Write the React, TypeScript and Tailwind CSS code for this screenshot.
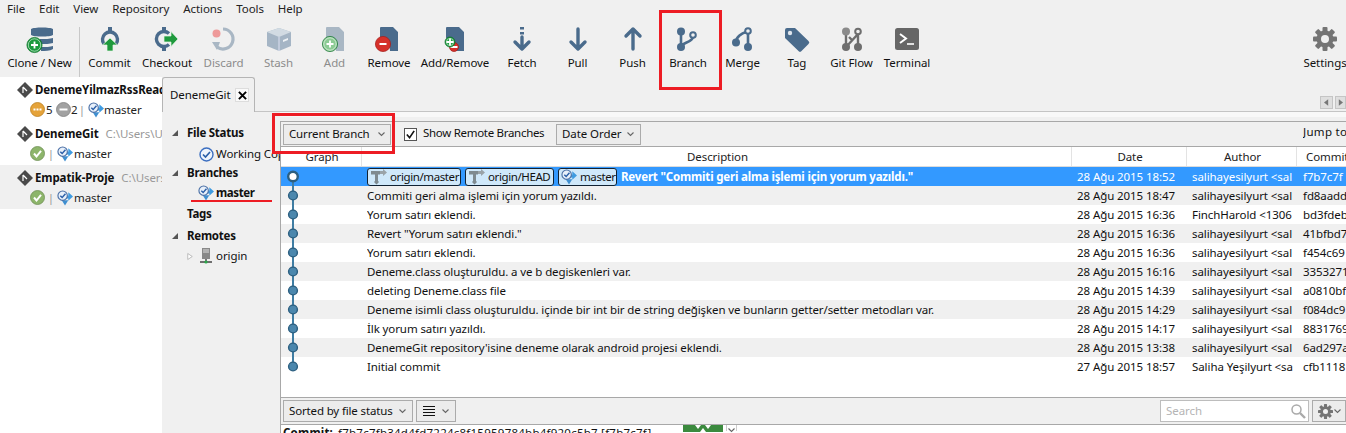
import React from "react";

const blue = "#4a6b8c";
const Plus = ({ x, y, r = 7, c = "#1a9a3c" }: { x: number; y: number; r?: number; c?: string }) => (
  <g>
    <circle cx={x} cy={y} r={r} fill={c} stroke="#0f6f2a" strokeWidth="0.7" />
    <circle cx={x} cy={y} r={r - 1.4} fill="none" stroke="#fff" strokeWidth="0.8" opacity="0.7" />
    <path d={`M${x - 3.5} ${y}h7M${x} ${y - 3.5}v7`} stroke="#fff" strokeWidth="1.8" />
  </g>
);
const Minus = ({ x, y, r = 7 }: { x: number; y: number; r?: number }) => (
  <g>
    <circle cx={x} cy={y} r={r} fill="#d5302a" stroke="#a31d18" strokeWidth="0.7" />
    <path d={`M${x - 3.5} ${y}h7`} stroke="#fff" strokeWidth="2" />
  </g>
);
const Doc = ({ c }: { c: string }) => <path d="M3 1q0-1 1-1h12l5 5v19H13c0-5-2-11-10-13Z" fill={c} />;

const icons: Record<string, React.ReactNode> = {
  clone: (
    <>
      <path d="M5 2c3-2 19-2 22 0v6c-3 2-19 2-22 0Z" fill={blue} />
      <path d="M14 12c5 0 10 0 13-1v5c-3 1-8 1-13 1Z" fill={blue} />
      <path d="M15 20c5 0 9 0 12-1v3c-3 2-8 2-12 2Z" fill={blue} />
      <Plus x={8.5} y={18} r={7.6} />
    </>
  ),
  commit: (
    <>
      <path d="M12 0v4" stroke={blue} strokeWidth="4" />
      <path d="M6 17a7.500 7.500 0 1 1 12 0" fill="none" stroke={blue} strokeWidth="3.400" />
      <path d="M12 11l7.500 7H15v6H9v-6H4.500Z" fill="#1f9a3d" stroke="#e8f5e8" strokeWidth="0.7" />
    </>
  ),
  checkout: (
    <>
      <path d="M9 0v4M9 20v4" stroke={blue} strokeWidth="4" />
      <path d="M14 6.500a7.500 7.500 0 1 0 0 11" fill="none" stroke={blue} strokeWidth="3.400" />
      <path d="M23 12l-7 7.500V15H9V9h7V4.500Z" fill="#1f9a3d" stroke="#e8f5e8" strokeWidth="0.7" />
    </>
  ),
  discard: (
    <>
      <path d="M11 2a10 10 0 1 1-6 18" fill="none" stroke="#a9b7c4" strokeWidth="3.200" />
      <path d="M0 15h8l-3 8Z" fill="#a9b7c4" />
      <circle cx="4.500" cy="6.500" r="4" fill="#ee9a9a" />
    </>
  ),
  stash: (
    <>
      <path d="M12 1l12 4v14l-12 5-12-5V5Z" fill="#a5b5c5" />
      <path d="M0 5l12 5 12-5-12-4Z" fill="#d2dbe3" />
      <path d="M12 10v14" stroke="#eef" strokeWidth="0.8" />
      <path d="M16 13l5-2v2l-5 2Z" fill="#eef2f5" />
    </>
  ),
  add: (
    <>
      <Doc c="#a9b7c4" />
      <Plus x={7} y={17} r={7.6} c="#8ccb94" />
    </>
  ),
  remove: (
    <>
      <Doc c={blue} />
      <Minus x={6} y={17} r={7.6} />
    </>
  ),
  addremove: (
    <>
      <Doc c={blue} />
      <Minus x={11} y={20} r={4.5} />
      <Plus x={7} y={15} r={5} />
    </>
  ),
  fetch: (
    <>
      <path d="M10 0h4v2.500h-4ZM10 5h4v2.500h-4Z" fill={blue} />
      <path d="M12 10v12M5 15l7 7 7-7" fill="none" stroke={blue} strokeWidth="3.400" strokeLinecap="round" strokeLinejoin="round" />
    </>
  ),
  pull: <path d="M12 2v20M5 15l7 7 7-7" fill="none" stroke={blue} strokeWidth="3.400" strokeLinecap="round" strokeLinejoin="round" />,
  push: <path d="M12 22V2M5 9l7-7 7 7" fill="none" stroke={blue} strokeWidth="3.400" strokeLinecap="round" strokeLinejoin="round" />,
  branch: (
    <>
      <path d="M5 5v15M5 20c1-5 11-4 12-10" fill="none" stroke={blue} strokeWidth="2.600" />
      <circle cx="5" cy="4.500" r="4" fill={blue} />
      <circle cx="5" cy="20" r="4" fill={blue} />
      <circle cx="17" cy="8" r="2.800" fill="#f0f0f0" stroke={blue} strokeWidth="2" />
    </>
  ),
  merge: (
    <>
      <path d="M17 7v13M5 15c0-5 6-9 10-10" fill="none" stroke={blue} strokeWidth="2.600" />
      <circle cx="17" cy="20" r="4" fill={blue} />
      <circle cx="5" cy="15.500" r="4" fill={blue} />
      <circle cx="17" cy="4" r="2.800" fill="#f0f0f0" stroke={blue} strokeWidth="2" />
    </>
  ),
  tag: (
    <>
      <path d="M0 3a2 2 0 0 1 2-2h8l13.500 13a2 2 0 0 1 0 3l-7 7a2 2 0 0 1-3 0L0 11Z" fill={blue} />
      <circle cx="5" cy="6" r="2.200" fill="#dfe6ee" />
    </>
  ),
  flow: (
    <>
      <path d="M6 5v15M18 5v15M6 20L18 7M9 10l3 3" fill="none" stroke="#6e6e6e" strokeWidth="2.400" />
      <circle cx="6" cy="4.500" r="4" fill="#8a8a8a" />
      <circle cx="6" cy="20" r="4" fill="#6e6e6e" />
      <circle cx="18" cy="4.500" r="2.800" fill="#f0f0f0" stroke="#6e6e6e" strokeWidth="2" />
      <circle cx="18" cy="20" r="4" fill="#6e6e6e" />
    </>
  ),
  terminal: (
    <>
      <rect x="0" y="1" width="24" height="22" rx="2.500" fill="#666" />
      <path d="M5 7l6 4.500-6 4.500" fill="none" stroke="#fff" strokeWidth="2" />
      <path d="M12 17h7" stroke="#fff" strokeWidth="1.600" />
    </>
  ),
  settings: <Gear c="#747474" />,
};

function Gear({ c }: { c: string }) {
  const teeth = [0, 45, 90, 135];
  return (
    <g>
      {teeth.map((a) => (
        <rect key={a} x="9.500" y="0" width="5" height="24" rx="1" fill={c} transform={`rotate(${a} 12 12)`} />
      ))}
      <circle cx="12" cy="12" r="8.500" fill={c} />
      <circle cx="12" cy="12" r="4" fill="#f0f0f0" />
    </g>
  );
}

const tools: [string, string, string, boolean?][] = [
  ["Commit", "commit", "w-[55px]"],
  ["Checkout", "checkout", "w-[60px]"],
  ["Discard", "discard", "w-[53px]", true],
  ["Stash", "stash", "w-[57px]", true],
  ["Add", "add", "w-[55px]", true],
  ["Remove", "remove", "w-[54px]"],
  ["Add/Remove", "addremove", "w-[78px]"],
  ["Fetch", "fetch", "w-[56px]"],
  ["Pull", "pull", "w-[55px]"],
  ["Push", "push", "w-[55px]"],
  ["Branch", "branch", "w-[56px]"],
  ["Merge", "merge", "w-[53px]"],
  ["Tag", "tag", "w-[56px]"],
  ["Git Flow", "flow", "w-[53px]"],
  ["Terminal", "terminal", "w-[58px]"],
];

const Tool = ({ label, icon, w, off }: { label: string; icon: string; w: string; off?: boolean }) => (
  <div className={`${w} flex shrink-0 flex-col items-center`}>
    <svg viewBox="0 0 24 24" width="24" height="24" className="shrink-0 overflow-visible">
      {icons[icon]}
    </svg>
    <span className={`mt-[3px] whitespace-nowrap leading-[17px] ${off ? "text-[#8c8c8c]" : "text-[#111]"}`}>{label}</span>
  </div>
);

const BranchIcon = () => (
  <svg viewBox="0 0 17 17" width="16" height="16" className="shrink-0">
    <path d="M9 6h3V2.500l5 4.500-5 4.500V9H9Z" fill="#3f9be0" />
    <path d="M5 11h7l-3.500 5.500Z" fill="#3f8fd0" />
    <circle cx="6" cy="6" r="5" fill="#e8f0fa" stroke="#4a6fa5" strokeWidth="1.200" />
    <path d="M3.500 6l2 2 3.500-4" fill="none" stroke="#2b5fa8" strokeWidth="1.500" />
  </svg>
);
const RemoteIcon = () => (
  <svg viewBox="0 0 17 17" width="17" height="17" className="shrink-0">
    <path d="M1 3h9v3.500H8V13l1 1-2.500 2.500L4 14l1-1V6.500H1Z" fill="#7f8a90" />
    <path d="M10 3h3V1l4 3.500-4 3.500V6h-3Z" fill="#9aa3a8" />
  </svg>
);
const Diamond = () => (
  <svg viewBox="0 0 16 16" width="16" height="16" className="shrink-0">
    <path d="M8 0l8 8-8 8-8-8Z" fill="#4a4a4a" />
    <path d="M6 5l4 4M6 5v6" stroke="#fff" strokeWidth="1.200" />
  </svg>
);
const Status = ({ kind }: { kind: "ok" | "more" | "less" }) => (
  <svg viewBox="0 0 15 15" width="15" height="15" className="shrink-0">
    {kind === "ok" && (
      <>
        <circle cx="7.500" cy="7.500" r="7" fill="#8db56b" stroke="#6f8f55" strokeWidth="0.800" />
        <path d="M4 7.500l2.500 3L11 4.800" fill="none" stroke="#fff" strokeWidth="2" />
      </>
    )}
    {kind === "more" && (
      <>
        <circle cx="7.500" cy="7.500" r="7" fill="#e5a33a" stroke="#bd8020" strokeWidth="0.800" />
        <path d="M3.500 7.500h8" stroke="#fff" strokeWidth="2" strokeDasharray="2 1" />
      </>
    )}
    {kind === "less" && (
      <>
        <circle cx="7.500" cy="7.500" r="7" fill="#a2a2a2" stroke="#808080" strokeWidth="0.800" />
        <path d="M3.500 7.500h8" stroke="#fff" strokeWidth="2" />
      </>
    )}
  </svg>
);
const Tri = () => (
  <svg viewBox="0 0 8 8" width="8" height="8" className="shrink-0">
    <path d="M7 1v6H1Z" fill="#555" />
  </svg>
);
const Chev = ({ className = "" }: { className?: string }) => (
  <svg viewBox="0 0 7 5" width="7" height="5" className={`shrink-0 ${className}`}>
    <path d="M.5 .5L3.500 3.500 6.500 .5" fill="none" stroke="#666" strokeWidth="1.100" />
  </svg>
);

const Repo = ({ name, path, sel, children }: { name: string; path?: string; sel?: boolean; children: React.ReactNode }) => (
  <div className={`flex h-[44px] flex-col overflow-hidden pl-[17px] pt-[3px] ${sel ? "bg-[#f0f0f0]" : ""}`}>
    <div className="flex h-[19px] items-center whitespace-nowrap">
      <Diamond />
      <span className="ml-[2px] font-bold tracking-[-0.1px] text-[#111]">{name}</span>
      {path && <span className="ml-[7px] text-[#999]">{path}</span>}
    </div>
    <div className="ml-[13px] mt-[1px] flex h-[19px] items-center whitespace-nowrap text-[#222]">{children}</div>
  </div>
);

const Pipe = () => <span className="w-[12px] shrink-0 text-center text-[#999]">|</span>;

const commits: [string, string, string, string][] = [
  ["Revert \"Commiti geri alma işlemi için yorum yazıldı.\"", "28 Ağu 2015 18:52", "salihayesilyurt <sal", "f7b7c7f"],
  ["Commiti geri alma işlemi için yorum yazıldı.", "28 Ağu 2015 18:47", "salihayesilyurt <sal", "fd8aadd"],
  ["Yorum satırı eklendi.", "28 Ağu 2015 16:36", "FinchHarold <1306", "bd3fdeb"],
  ["Revert \"Yorum satırı eklendi.\"", "28 Ağu 2015 16:36", "salihayesilyurt <sal", "41bfbd7"],
  ["Yorum satırı eklendi.", "28 Ağu 2015 16:36", "salihayesilyurt <sal", "f454c69"],
  ["Deneme.class oluşturuldu. a ve b degiskenleri var.", "28 Ağu 2015 16:16", "salihayesilyurt <sal", "3353271"],
  ["deleting Deneme.class file", "28 Ağu 2015 14:39", "salihayesilyurt <sal", "a0810bf"],
  ["Deneme isimli class oluşturuldu. içinde bir int bir de string değişken ve bunların getter/setter metodları var.", "28 Ağu 2015 14:29", "salihayesilyurt <sal", "f084dc9"],
  ["İlk yorum satırı yazıldı.", "28 Ağu 2015 14:17", "salihayesilyurt <sal", "8831769"],
  ["DenemeGit repository'isine deneme olarak android projesi eklendi.", "28 Ağu 2015 13:38", "salihayesilyurt <sal", "6ad297a"],
  ["Initial commit", "27 Ağu 2015 18:57", "Saliha Yeşilyurt <sa", "cfb1118"],
];

const Chip = ({ label, icon, w }: { label: string; icon: React.ReactNode; w: string }) => (
  <span className={`${w} mr-[4px] flex h-[18px] shrink-0 items-center gap-[3px] rounded-[3px] border border-[#123] bg-[#cfe8fa] pl-[2px] tracking-[-0.4px] text-[#111]`}>
    {icon}
    {label}
  </span>
);

const Row = ({ c, i }: { c: [string, string, string, string]; i: number }) => {
  const sel = i === 0;
  const n = commits.length;
  const bg = sel ? "bg-[#3399ff] text-white" : i % 2 ? "bg-[#f0f0f0] text-[#111]" : "bg-white text-[#111]";
  return (
    <div className={`flex h-[19px] items-center whitespace-nowrap ${bg}`}>
      <div className="w-[86px] shrink-0">
        <svg viewBox="0 0 86 19" width="86" height="19" className="block">
          <path d={`M12 ${i === 0 ? 9.5 : 0}V${i === n - 1 ? 9.5 : 19}`} stroke="#3f7da3" strokeWidth="2" />
          {sel ? (
            <circle cx="12" cy="9.500" r="4.800" fill="#fff" stroke="#2c5f80" strokeWidth="2.400" />
          ) : (
            <circle cx="12" cy="9.500" r="4.400" fill="#4b87ad" stroke="#2c5f80" strokeWidth="1.400" />
          )}
        </svg>
      </div>
      <div className="flex w-[705px] shrink-0 items-center overflow-hidden">
        {sel && (
          <>
            <Chip label="origin/master" icon={<RemoteIcon />} w="w-[94px]" />
            <Chip label="origin/HEAD" icon={<RemoteIcon />} w="w-[89px]" />
            <Chip label="master" icon={<BranchIcon />} w="w-[59px]" />
          </>
        )}
        <span className={sel ? "font-bold tracking-[-0.18px]" : "tracking-[-0.1px]"}>{c[0]}</span>
      </div>
      <div className="w-[115px] shrink-0 overflow-hidden pl-[5px]">{c[1]}</div>
      <div className="w-[110px] shrink-0 overflow-hidden pl-[5px]">{c[2]}</div>
      <div className="flex-1 overflow-hidden pl-[6px]">{c[3]}</div>
    </div>
  );
};

const HeaderCell = ({ w, children }: { w: string; children: React.ReactNode }) => (
  <div className={`${w} flex h-full items-center justify-center border-r border-[#e3e3e3] pl-[2px] pt-px`}>{children}</div>
);

const btn = "flex items-center justify-between whitespace-nowrap border border-[#ababab] bg-[#ececec] text-[#111]";

export default function App() {
  return (
    <div className="relative h-[433px] w-[1346px] overflow-hidden bg-[#f0f0f0] text-[11.5px] leading-[16px] tracking-[-0.08px] text-[#111] font-['Noto_Sans',sans-serif]">
      {/* Menu bar */}
      <div className="flex h-[18px] items-center gap-[14px] pl-[7px] text-[#222]">
        {["File", "Edit", "View", "Repository", "Actions", "Tools", "Help"].map((m) => (
          <span key={m}>{m}</span>
        ))}
      </div>

      {/* Toolbar */}
      <div className="flex h-[59px] items-start pt-[9px]">
        <div className="flex h-[50px] w-[80px] shrink-0 flex-col items-center border-r border-[#c8c8c8]">
          <svg viewBox="0 0 28 24" width="28" height="24" className="shrink-0 overflow-visible">
            {icons.clone}
          </svg>
          <span className="mt-[3px] whitespace-nowrap leading-[17px] text-[#111]">Clone / New</span>
        </div>
        <div className="w-[2px] shrink-0" />
        {tools.map(([l, ic, w, off]) => (
          <Tool key={l} label={l} icon={ic} w={w} off={off} />
        ))}
        <div className="flex-1" />
        <div className="w-[42px] shrink-0">
          <Tool label="Settings" icon="settings" w="w-[42px]" />
        </div>
      </div>

      {/* Body */}
      <div className="flex h-[356px]">
        <div className="w-[162px] shrink-0 overflow-hidden bg-white">
          <Repo name="DenemeYilmazRssReader">
            <Status kind="more" />
            <span className="ml-[1px] w-[7px]">5</span>
            <span className="ml-[3px] flex"><Status kind="less" /></span>
            <span className="w-[7px]">2</span>
            <span className="-ml-[2px] flex"><Pipe /></span>
            <BranchIcon />
            <span>master</span>
          </Repo>
          <Repo name="DenemeGit" path="C:\Users\Ulaş">
            <Status kind="ok" />
            <Pipe />
            <BranchIcon />
            <span className="ml-[1px]">master</span>
          </Repo>
          <Repo name="Empatik-Proje" path="C:\Users\Ulaş" sel>
            <Status kind="ok" />
            <Pipe />
            <BranchIcon />
            <span className="ml-[1px]">master</span>
          </Repo>
        </div>

        <div className="flex min-w-0 flex-1 flex-col">
          {/* Tab strip */}
          <div className="flex h-[35px] shrink-0 items-end justify-between border-b border-[#c4c4c4]">
            <div className="-mb-px flex h-[35px] w-[93px] items-center gap-[5px] rounded-t-[3px] border border-b-0 border-[#b5b5b5] bg-[#f0f0f0] pl-[7px]">
              <span>DenemeGit</span>
              <span className="flex h-[14px] w-[14px] items-center justify-center border border-[#ddd] bg-[#fafafa]">
                <svg viewBox="0 0 10 10" width="9" height="9"><path d="M1 1l8 8M9 1l-8 8" stroke="#000" strokeWidth="2.200" /></svg>
              </span>
            </div>
            <div className="mb-[2px] flex gap-[2px]">
              <span className="flex h-[13px] w-[13px] items-center justify-center border border-[#c5c5c5] bg-[#dfdfdf]">
                <svg viewBox="0 0 6 8" width="5" height="7"><path d="M5 0v8L0 4Z" fill="#777" /></svg>
              </span>
              <span className="flex h-[13px] w-[11px] items-center justify-center border border-[#c5c5c5] bg-[#dfdfdf]">
                <svg viewBox="0 0 6 8" width="5" height="7"><path d="M1 0v8l5-4Z" fill="#777" /></svg>
              </span>
            </div>
          </div>
          <div className="flex min-h-0 flex-1">
            {/* Nav */}
            <div className="w-[118px] shrink-0 overflow-hidden whitespace-nowrap pt-[12px] text-[#111]">
              <div className="flex h-[18px] items-center pl-[9px] font-bold tracking-[-0.25px]"><Tri /><span className="ml-[8px]">File Status</span></div>
              <div className="mt-[3px] flex h-[18px] items-center pl-[37px]">
                <svg viewBox="0 0 15 15" width="15" height="15" className="shrink-0">
                  <circle cx="7.500" cy="7.500" r="6.500" fill="#eef4fc" stroke="#3c6fc0" strokeWidth="1.400" />
                  <path d="M4 7.500l2.500 2.500L11 5" fill="none" stroke="#2b5fa8" strokeWidth="1.700" />
                </svg>
                <span className="ml-[2px]">Working Copy</span>
              </div>
              <div className="mt-[1px] flex h-[18px] items-center pl-[9px] font-bold tracking-[-0.25px]"><Tri /><span className="ml-[8px]">Branches</span></div>
              <div className="mt-[2px] flex h-[18px] items-center pl-[36px] font-bold tracking-[-0.4px]"><BranchIcon /><span className="ml-[2px]">master</span></div>
              <div className="mt-[3px] flex h-[18px] items-center pl-[25px] font-bold tracking-[-0.25px]">Tags</div>
              <div className="mt-[4px] flex h-[18px] items-center pl-[9px] font-bold tracking-[-0.25px]"><Tri /><span className="ml-[8px]">Remotes</span></div>
              <div className="mt-[2px] flex h-[18px] items-center pl-[25px]">
                <svg viewBox="0 0 8 10" width="6" height="9" className="shrink-0"><path d="M1 1l6 4-6 4Z" fill="#fff" stroke="#aaa" /></svg>
                <svg viewBox="0 0 14 16" width="14" height="16" className="ml-[6px] shrink-0">
                  <rect x="3" y="0" width="8" height="11" fill="#888" />
                  <path d="M4 2h6M4 4h6" stroke="#ddd" />
                  <path d="M7 11v3M1 14h12" stroke="#444" strokeWidth="1.400" />
                  <circle cx="7" cy="14" r="1.600" fill="#2aa84a" />
                </svg>
                <span className="ml-[3px]">origin</span>
              </div>
            </div>

            {/* Log panel */}
            <div className="flex min-w-0 flex-1 flex-col">
              <div className="h-[5px] shrink-0 bg-[#f8f8f8]" />
              <div className="h-[4px] shrink-0" />
              <div className="flex min-h-0 flex-1 flex-col border-l border-t border-[#a8a8a8]">
                <div className="relative flex h-[25px] shrink-0 items-center border-b border-[#a8a8a8] pl-[2px]">
                  <div className={`${btn} h-[21px] w-[108px] pl-[5px] pr-[5px] tracking-[-0.15px]`}>
                    <span>Current Branch</span>
                    <Chev />
                  </div>
                  <span className="ml-[13px] flex h-[13px] w-[13px] shrink-0 items-center justify-center border border-[#555] bg-white">
                    <svg viewBox="0 0 12 12" width="11" height="11"><path d="M2 6l3 3.500L10 2" fill="none" stroke="#111" strokeWidth="1.800" /></svg>
                  </span>
                  <span className="ml-[6px] -mt-[2px] w-[121px] shrink-0 whitespace-nowrap tracking-[-0.3px]">Show Remote Branches</span>
                  <div className={`${btn} ml-[12px] h-[21px] w-[85px] pl-[5px] pr-[6px]`}>
                    <span>Date Order</span>
                    <Chev />
                  </div>
                  <span className="flex-1" />
                  <span className="-mt-[4px] w-[43px] shrink-0 overflow-hidden whitespace-nowrap tracking-[0.3px]">Jump to:</span>
                </div>
                <div className="flex h-[20px] shrink-0 items-center border-b border-[#dcdcdc] bg-white text-[#222]">
                  <HeaderCell w="w-[81px]">Graph</HeaderCell>
                  <HeaderCell w="w-[710px]">Description</HeaderCell>
                  <HeaderCell w="w-[115px]">Date</HeaderCell>
                  <HeaderCell w="w-[110px]">Author</HeaderCell>
                  <div className="flex-1 overflow-hidden pl-[9px] pt-px">Commit</div>
                </div>
                <div className="h-[231px] shrink-0 overflow-hidden border-b border-[#a8a8a8] bg-white">
                  {commits.map((c, i) => (
                    <Row key={i} c={c} i={i} />
                  ))}
                </div>
                <div className="flex h-[27px] shrink-0 items-center border-b border-[#a8a8a8] pl-[2px]">
                  <div className={`${btn} h-[22px] w-[130px] pl-[5px] pr-[6px] tracking-[-0.15px]`}>
                    <span>Sorted by file status</span>
                    <Chev />
                  </div>
                  <div className={`${btn} ml-[3px] h-[22px] w-[40px] pl-[6px] pr-[6px]`}>
                    <svg viewBox="0 0 12 10" width="12" height="10" className="shrink-0"><path d="M0 .5h12M0 3.500h12M0 6.500h12M0 9.500h12" stroke="#111" /></svg>
                    <Chev />
                  </div>
                  <div className="flex-1" />
                  <div className="flex h-[22px] w-[149px] shrink-0 items-center border border-[#bdbdbd] bg-white pl-[5px] text-[#b5b5b5]">
                    <span className="flex-1">Search</span>
                    <svg viewBox="0 0 16 16" width="16" height="16" className="mr-[2px] shrink-0">
                      <circle cx="6.500" cy="6.500" r="4.500" fill="none" stroke="#aaa" strokeWidth="1.500" />
                      <path d="M10 10l5 5" stroke="#aaa" strokeWidth="2.400" />
                    </svg>
                  </div>
                  <div className={`${btn} ml-[3px] h-[22px] w-[34px] shrink-0 pl-[5px] pr-[4px]`}>
                    <svg viewBox="0 0 24 24" width="15" height="15" className="shrink-0">
                      <Gear c="#747474" />
                    </svg>
                    <Chev />
                  </div>
                </div>
                <div className="flex h-[12px] shrink-0 items-start whitespace-nowrap bg-white pl-[2px]">
                  <span className="w-[55px] shrink-0 font-bold tracking-[0.2px]">Commit:</span>
                  <span className="w-[345px] shrink-0 tracking-[0.24px]">f7b7c7fb34d4fd7224c8f15959784bb4f920c5b7 [f7b7c7f]</span>
                  <svg viewBox="0 0 40 7" width="40" height="7" className="shrink-0">
                    <rect width="40" height="7" fill="#3b8a3e" />
                    <path d="M12 0h6l-3 4ZM22 0h6l-3 4ZM17 7l3-4 3 4Z" fill="#fff" />
                  </svg>
                  <div className="ml-[3px] flex h-[6px] w-[11px] shrink-0 justify-center border-x border-[#ccc] pt-[3px]">
                    <Chev />
                  </div>
                </div>
              </div>
            </div>
          </div>
        </div>
      </div>

      {/* Annotations drawn over the screenshot */}
      <div className="absolute left-[659px] top-[10px] h-[80px] w-[63px] border-[3px] border-[#ed1c24]" />
      <div className="absolute left-[272px] top-[113px] h-[41px] w-[123px] border-[3px] border-[#ed1c24]" />
      <div className="absolute left-[191px] top-[200px] h-[2px] w-[81px] bg-[#ed1c24]" />
    </div>
  );
}
